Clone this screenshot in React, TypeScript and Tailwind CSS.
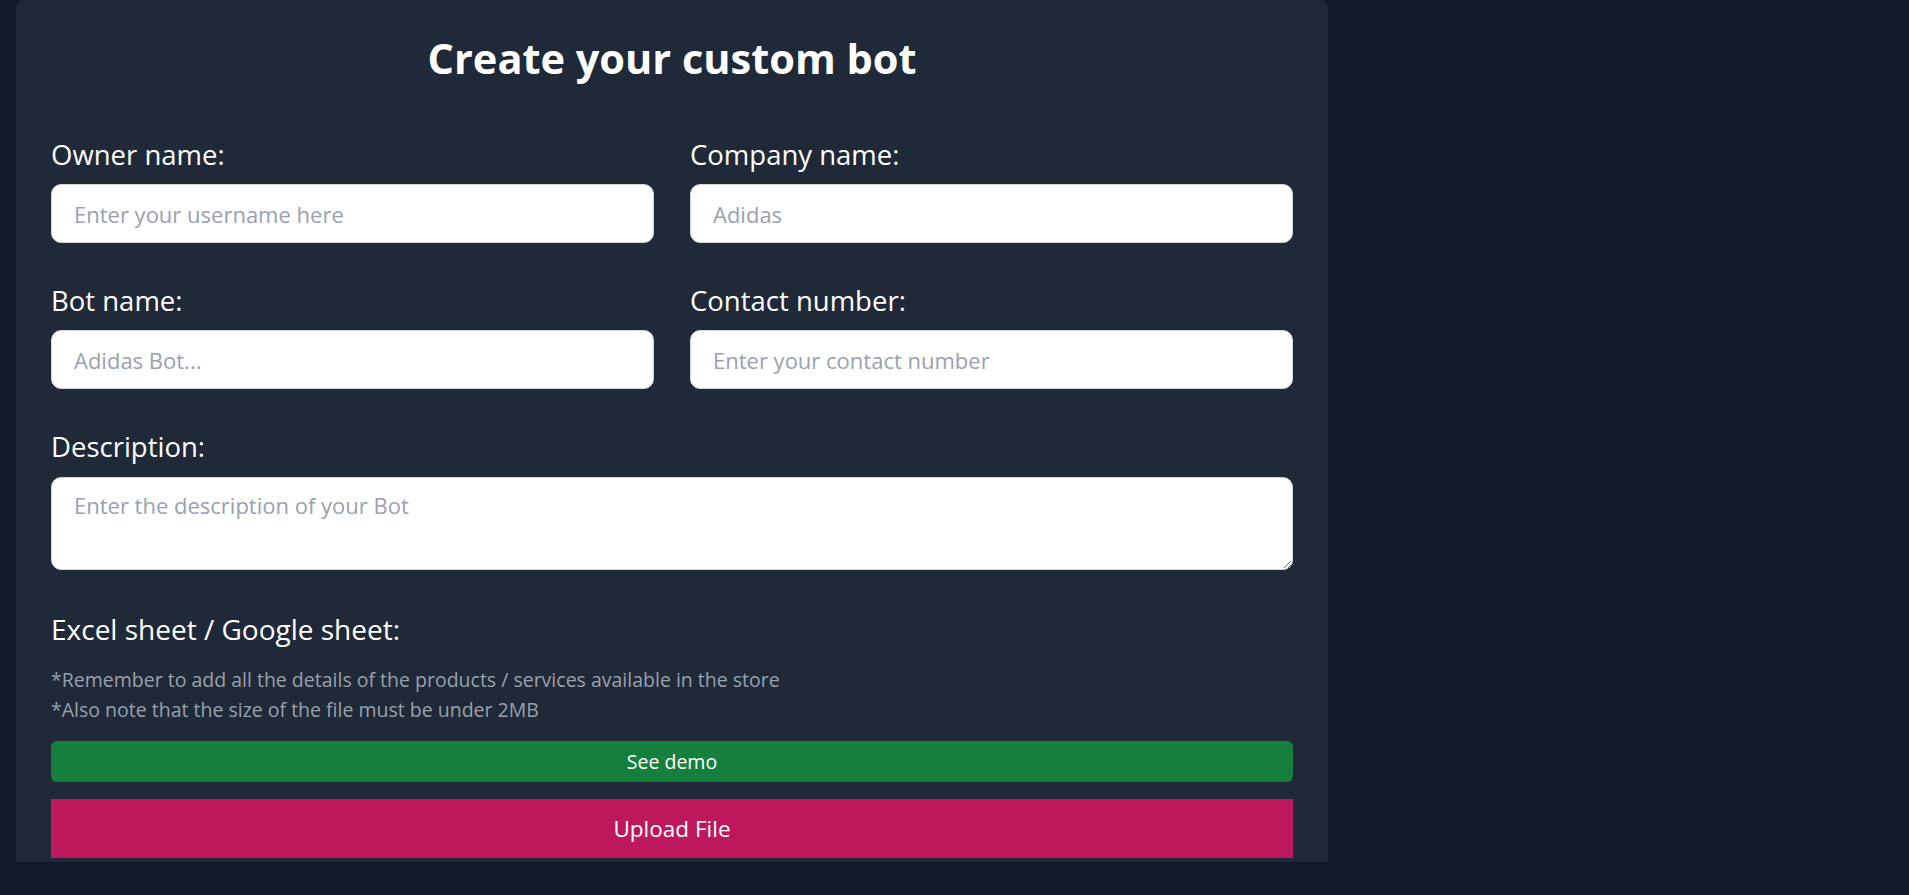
import React from "react";

const font = { fontFamily: '"Segoe UI", "Open Sans", "Noto Sans", sans-serif' };

function Field({ label, placeholder }: { label: string; placeholder: string }) {
  return (
    <div className="flex flex-col">
      <label className="text-[27.5px] leading-[36px] text-white">{label}</label>
      <input
        type="text"
        placeholder={placeholder}
        className="mt-[11px] h-[59px] w-full rounded-[10px] border border-gray-300 bg-white px-[22px] text-[22px] text-gray-900 placeholder:text-gray-400 outline-none"
      />
    </div>
  );
}

export default function App() {
  return (
    <div className="min-h-screen w-full bg-[#111827]" style={font}>
      <div className="ml-4 flex h-[862px] w-[1312px] flex-col overflow-hidden rounded-t-lg bg-[#1f2937] px-[35px]">
        <h1 className="mt-[38px] text-center text-[41.5px] font-bold leading-[40px] text-white">
          Create your custom bot
        </h1>

        <div className="mt-[59px] grid grid-cols-2 gap-x-9 gap-y-[40px]">
          <Field label="Owner name:" placeholder="Enter your username here" />
          <Field label="Company name:" placeholder="Adidas" />
          <Field label="Bot name:" placeholder="Adidas Bot..." />
          <Field label="Contact number:" placeholder="Enter your contact number" />
        </div>

        <div className="mt-[40px] flex flex-col">
          <label className="text-[27.5px] leading-[36px] text-white">Description:</label>
          <textarea
            placeholder="Enter the description of your Bot"
            className="mt-[12px] h-[93px] w-full rounded-[10px] border border-gray-300 bg-white px-[22px] py-[13px] text-[22px] leading-[28px] text-gray-900 placeholder:text-gray-400 outline-none"
          />
        </div>

        <div className="mt-[41px] flex flex-col">
          <label className="text-[28px] leading-[36px] text-white">Excel sheet / Google sheet:</label>
          <div className="mt-[18px] text-[19.5px] leading-[30px] text-gray-400">
            <p>*Remember to add all the details of the products / services available in the store</p>
            <p>*Also note that the size of the file must be under 2MB</p>
          </div>
          <button className="mt-[16px] h-[41px] w-full rounded-md bg-[#15803d] text-[19.5px] text-white">
            See demo
          </button>
          <button className="mt-[17px] h-[59px] w-full shrink-0 bg-[#be185d] text-[22.5px] text-white">
            Upload File
          </button>
        </div>
      </div>
    </div>
  );
}
